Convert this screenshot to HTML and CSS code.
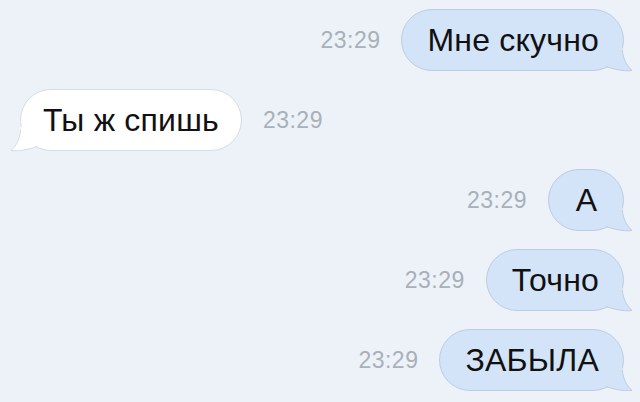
FILE: index.html
```html
<!DOCTYPE html>
<html lang="ru">
<head>
  <meta charset="UTF-8" />
  <meta name="viewport" content="width=device-width, initial-scale=1.0" />
  <title>Чат</title>
  <link rel="stylesheet" href="styles.css">
</head>
<body>
  <div class="chat">
    <div class="row out">
      <span class="time">23:29</span>
      <div class="bubble">Мне скучно
        <svg class="tail" viewBox="0 0 26 24" width="26" height="24"><path class="tail-fill" d="M0 0 L16 0 C17 11 20 18 26 23.5 C18 24.5 9 22.5 0 19.5 Z"/><path class="tail-line" d="M16.3 3 C17.3 12 20 18 26 23.5 C18 24.5 9 22.5 0 19.5"/></svg>
      </div>
    </div>
    <div class="row in">
      <div class="bubble">Ты ж спишь
        <svg class="tail" viewBox="0 0 26 24" width="26" height="24"><path class="tail-fill" d="M0 0 L16 0 C17 11 20 18 26 23.5 C18 24.5 9 22.5 0 19.5 Z"/><path class="tail-line" d="M16.3 3 C17.3 12 20 18 26 23.5 C18 24.5 9 22.5 0 19.5"/></svg>
      </div>
      <span class="time">23:29</span>
    </div>
    <div class="row out">
      <span class="time">23:29</span>
      <div class="bubble short">А
        <svg class="tail" viewBox="0 0 26 24" width="26" height="24"><path class="tail-fill" d="M0 0 L16 0 C17 11 20 18 26 23.5 C18 24.5 9 22.5 0 19.5 Z"/><path class="tail-line" d="M16.3 3 C17.3 12 20 18 26 23.5 C18 24.5 9 22.5 0 19.5"/></svg>
      </div>
    </div>
    <div class="row out">
      <span class="time">23:29</span>
      <div class="bubble">Точно
        <svg class="tail" viewBox="0 0 26 24" width="26" height="24"><path class="tail-fill" d="M0 0 L16 0 C17 11 20 18 26 23.5 C18 24.5 9 22.5 0 19.5 Z"/><path class="tail-line" d="M16.3 3 C17.3 12 20 18 26 23.5 C18 24.5 9 22.5 0 19.5"/></svg>
      </div>
    </div>
    <div class="row out">
      <span class="time">23:29</span>
      <div class="bubble">ЗАБЫЛА
        <svg class="tail" viewBox="0 0 26 24" width="26" height="24"><path class="tail-fill" d="M0 0 L16 0 C17 11 20 18 26 23.5 C18 24.5 9 22.5 0 19.5 Z"/><path class="tail-line" d="M16.3 3 C17.3 12 20 18 26 23.5 C18 24.5 9 22.5 0 19.5"/></svg>
      </div>
    </div>
  </div>
</body>
</html>
```
FILE: styles.css
```css
body {
  margin: 0;
  background: #edf2f9;
  font-family: "Liberation Sans", Arial, sans-serif;
  color: #111;
}
.chat {
  display: flex;
  flex-direction: column;
  gap: 18px;
  padding: 9px 16px 0 20px;
}
.row {
  display: flex;
  align-items: center;
  gap: 21px;
}
.row.out {
  justify-content: flex-end;
}
.time {
  font-size: 23px;
  letter-spacing: 0.5px;
  color: #a8b0ba;
}
.bubble {
  position: relative;
  height: 62px;
  box-sizing: border-box;
  padding: 0 24px 0 25px;
  display: flex;
  align-items: center;
  justify-content: center;
  font-size: 32px;
  letter-spacing: 0.2px;
  border-radius: 31px;
  border: 1px solid #bccde3;
  background: #d4e4f8;
}
.bubble.short {
  min-width: 76px;
}
.in .bubble {
  background: #fff;
  border-color: #d6dce4;
  padding: 0 22px;
}
.tail {
  position: absolute;
  right: -9px;
  bottom: -1px;
  overflow: visible;
}
.in .tail {
  right: auto;
  left: -10px;
  transform: scaleX(-1);
}
.tail-fill {
  fill: #d4e4f8;
}
.tail-line {
  fill: none;
  stroke: #bccde3;
  stroke-width: 1;
}
.in .tail-fill {
  fill: #fff;
}
.in .tail-line {
  stroke: #d6dce4;
}
```
